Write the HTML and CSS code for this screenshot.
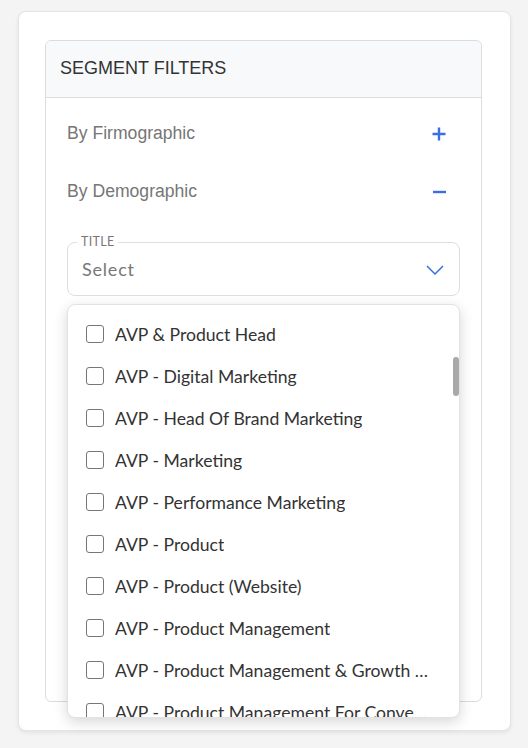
FILE: index.html
```html
<!DOCTYPE html>
<html lang="en">
<head>
<meta charset="utf-8">
<title>Segment Filters</title>
<link rel="stylesheet" href="styles.css">
</head>
<body>
<div class="card">
  <section class="panel">
    <header class="panel-head">SEGMENT FILTERS</header>
    <div class="panel-body">
      <div class="acc-row">
        <span class="acc-label">By Firmographic</span>
        <svg class="acc-icon" width="16" height="16" viewBox="0 0 16 16"><path d="M8 1.5v13M1.5 8h13" stroke="#3a6ee8" stroke-width="2.4" fill="none"/></svg>
      </div>
      <div class="acc-row">
        <span class="acc-label">By Demographic</span>
        <svg class="acc-icon" width="16" height="16" viewBox="0 0 16 16"><path d="M2 8h13" stroke="#3a6ee8" stroke-width="2.4" fill="none"/></svg>
      </div>
      <div class="select-wrap">
        <fieldset class="field">
          <legend class="field-label">TITLE</legend>
          <div class="field-control">
            <span class="placeholder">Select</span>
            <svg class="chevron" width="18" height="10" viewBox="0 0 18 10"><path d="M1 1l8 8 8-8" stroke="#3a6ee8" stroke-width="1.5" fill="none"/></svg>
          </div>
        </fieldset>
        <div class="menu">
          <ul class="menu-list">
            <li class="menu-item"><span class="box"></span><span class="item-text">AVP &amp; Product Head</span></li>
            <li class="menu-item"><span class="box"></span><span class="item-text">AVP - Digital Marketing</span></li>
            <li class="menu-item"><span class="box"></span><span class="item-text">AVP - Head Of Brand Marketing</span></li>
            <li class="menu-item"><span class="box"></span><span class="item-text">AVP - Marketing</span></li>
            <li class="menu-item"><span class="box"></span><span class="item-text">AVP - Performance Marketing</span></li>
            <li class="menu-item"><span class="box"></span><span class="item-text">AVP - Product</span></li>
            <li class="menu-item"><span class="box"></span><span class="item-text">AVP - Product (Website)</span></li>
            <li class="menu-item"><span class="box"></span><span class="item-text">AVP - Product Management</span></li>
            <li class="menu-item"><span class="box"></span><span class="item-text">AVP - Product Management &amp; Growth Strategy</span></li>
            <li class="menu-item"><span class="box"></span><span class="item-text">AVP - Product Management For Conversational AI</span></li>
          </ul>
          <div class="thumb"></div>
        </div>
      </div>
    </div>
  </section>
</div>
</body>
</html>
```
FILE: styles.css
```css
* { box-sizing: border-box; }
html, body { margin: 0; padding: 0; }
body {
  background: #f4f4f4;
  width: 528px;
  height: 748px;
  overflow: hidden;
  font-family: "Liberation Sans", Arial, sans-serif;
}
.card {
  margin: 11px 17px 0 18px;
  height: 720px;
  background: #fff;
  border: 1px solid #e4e4e4;
  border-radius: 8px;
  box-shadow: 0 2px 4px rgba(0,0,0,0.07);
  padding: 28px 28px 28px 26px;
}
.panel {
  height: 662px;
  border: 1px solid #dcdcdc;
  border-radius: 6px;
}
.panel-head {
  height: 57px;
  background: #f8f9fb;
  border-bottom: 1px solid #dcdcdc;
  border-radius: 6px 6px 0 0;
  display: flex;
  align-items: center;
  padding-left: 14px;
  padding-bottom: 1px;
  font-size: 18px;
  color: #333;
}
.panel-body {
  padding: 6px 21px 0 21px;
}
.acc-row {
  height: 58px;
  display: flex;
  align-items: center;
  justify-content: space-between;
}
.acc-row + .acc-row { padding-top: 1px; }
.acc-label {
  font-size: 17.6px;
  color: #767676;
}
.acc-icon {
  margin-right: 13px;
  margin-top: 1px;
}
.select-wrap {
  position: relative;
  margin-top: 15px;
}
.field {
  margin: 0;
  padding: 0 15px 6px 14px;
  border: 1px solid #dedede;
  border-radius: 8px;
  min-width: 0;
}
.field-label {
  margin-left: -5px;
  padding: 0 4px;
  font-family: Lato, "Liberation Sans", sans-serif;
  font-size: 12.5px;
  line-height: 14px;
  color: #777;
  letter-spacing: 0.3px;
}
.field-control {
  height: 40px;
  display: flex;
  align-items: center;
  justify-content: space-between;
}
.placeholder {
  font-family: Lato, "Liberation Sans", sans-serif;
  font-size: 18px;
  letter-spacing: 0.8px;
  color: #777;
}
.chevron { margin-top: 1px; }
.menu {
  position: absolute;
  left: 0;
  right: 0;
  top: calc(100% + 8px);
  height: 414px;
  background: #fff;
  border: 1px solid #e2e2e2;
  border-radius: 8px;
  box-shadow: 0 4px 14px rgba(0,0,0,0.16);
  overflow: hidden;
}
.menu-list {
  list-style: none;
  margin: 0;
  padding: 8px 0 0 0;
}
.menu-item {
  height: 42px;
  display: flex;
  align-items: center;
  padding: 0 30px 0 18px;
}
.box {
  flex: none;
  width: 18px;
  height: 18px;
  border: 1.5px solid #767676;
  border-radius: 3px;
  margin-right: 11px;
}
.item-text {
  font-family: Lato, "Liberation Sans", sans-serif;
  font-size: 17.6px;
  color: #333;
  white-space: nowrap;
  overflow: hidden;
  text-overflow: ellipsis;
  min-width: 0;
}
.thumb {
  position: absolute;
  right: 0;
  top: 52px;
  width: 6px;
  height: 39px;
  border-radius: 3px;
  background: #a9a9a9;
}
```
